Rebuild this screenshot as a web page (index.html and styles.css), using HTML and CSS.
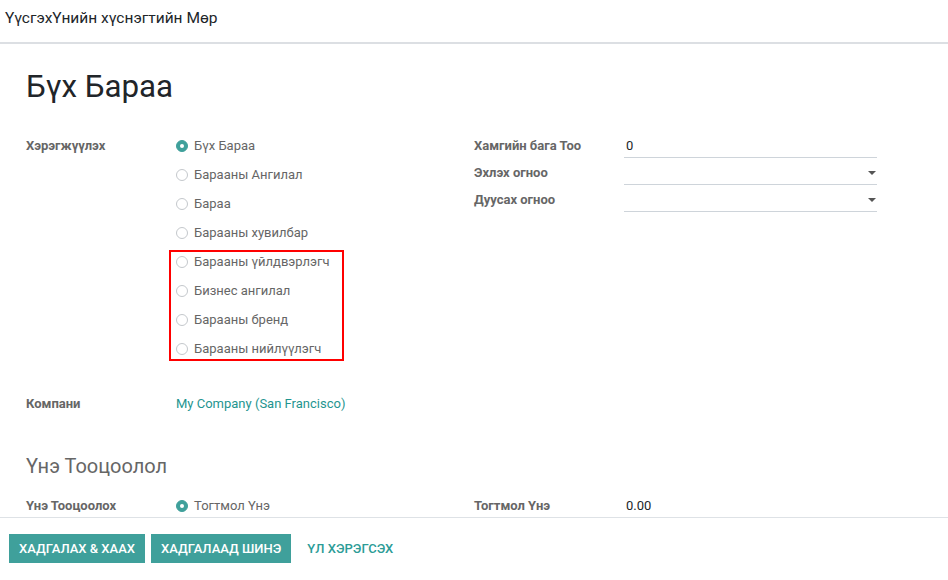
FILE: index.html
```html
<!DOCTYPE html>
<html lang="mn">
<head>
<meta charset="utf-8">
<title>ҮүсгэхҮнийн хүснэгтийн Мөр</title>
<link rel="stylesheet" href="styles.css">
</head>
<body>
<div class="dialog">
  <header class="dlg-header">ҮүсгэхҮнийн хүснэгтийн Мөр</header>
  <main class="dlg-body">
    <h1 class="title">Бүх Бараа</h1>
    <div class="group">
      <div class="col">
        <div class="row top">
          <div class="label">Хэрэгжүүлэх</div>
          <div class="radios">
            <div class="radio checked"><span class="dot"></span>Бүх Бараа</div>
            <div class="radio"><span class="dot"></span>Барааны Ангилал</div>
            <div class="radio"><span class="dot"></span>Бараа</div>
            <div class="radio"><span class="dot"></span>Барааны хувилбар</div>
            <div class="radio"><span class="dot"></span>Барааны үйлдвэрлэгч</div>
            <div class="radio"><span class="dot"></span>Бизнес ангилал</div>
            <div class="radio"><span class="dot"></span>Барааны бренд</div>
            <div class="radio"><span class="dot"></span>Барааны нийлүүлэгч</div>
            <div class="highlight"></div>
          </div>
        </div>
      </div>
      <div class="col">
        <div class="frow">
          <div class="label">Хамгийн бага Тоо</div>
          <div class="input">0</div>
        </div>
        <div class="frow">
          <div class="label">Эхлэх огноо</div>
          <div class="input select"><span class="caret"></span></div>
        </div>
        <div class="frow">
          <div class="label">Дуусах огноо</div>
          <div class="input select"><span class="caret"></span></div>
        </div>
      </div>
    </div>
    <div class="group company">
      <div class="col">
        <div class="row">
          <div class="label">Компани</div>
          <a class="link">My Company (San Francisco)</a>
        </div>
      </div>
    </div>
    <h2 class="section">Үнэ Тооцоолол</h2>
    <div class="group">
      <div class="col">
        <div class="row">
          <div class="label">Үнэ Тооцоолох</div>
          <div class="radio checked"><span class="dot"></span>Тогтмол Үнэ</div>
        </div>
      </div>
      <div class="col">
        <div class="frow">
          <div class="label">Тогтмол Үнэ</div>
          <div class="input">0.00</div>
        </div>
      </div>
    </div>
  </main>
  <footer class="dlg-footer">
    <button class="btn primary">ХАДГАЛАХ &amp; ХААХ</button>
    <button class="btn primary">ХАДГАЛААД ШИНЭ</button>
    <button class="btn plain">ҮЛ ХЭРЭГСЭХ</button>
  </footer>
</div>
</body>
</html>
```
FILE: styles.css
```css
* { box-sizing: border-box; }
html, body { margin: 0; padding: 0; background: #fff; }
body {
  font-family: Roboto, "Noto Sans", "Liberation Sans", sans-serif;
  font-size: 13px;
  color: #4c4c4c;
}
.dialog {
  width: 948px;
  height: 580px;
  display: flex;
  flex-direction: column;
  overflow: hidden;
}
.dlg-header {
  height: 44px;
  flex: none;
  padding: 8px 0 0 5px;
  font-size: 15.5px;
  line-height: 20px;
  color: #212529;
  border-bottom: 2px solid #dcdfe3;
}
.dlg-body {
  flex: 1;
  overflow: hidden;
  padding: 0 26px;
}
.title {
  margin: 23px 0 0;
  font-size: 31.3px;
  font-weight: 400;
  line-height: 40px;
  color: #212529;
}
.group {
  display: flex;
  margin-top: 24px;
}
.col { width: 448px; }
.row {
  display: flex;
  align-items: flex-start;
  min-height: 29px;
}
.label {
  width: 150px;
  flex: none;
  font-weight: 700;
  color: #666;
  line-height: 29px;
}
.frow .label {
  line-height: 25px;
  padding-top: 2px;
}
.radios {
  position: relative;
  display: flex;
  flex-direction: column;
}
.radio {
  display: flex;
  align-items: center;
  height: 29px;
  color: #666;
}
.dot {
  width: 12px;
  height: 12px;
  border-radius: 50%;
  border: 1px solid #c4c8cc;
  background: #fff;
  margin-right: 6px;
  flex: none;
  position: relative;
}
.radio.checked .dot {
  background: #3fa09b;
  border-color: #3fa09b;
}
.radio.checked .dot::after {
  content: "";
  position: absolute;
  left: 3px;
  top: 3px;
  width: 4px;
  height: 4px;
  border-radius: 50%;
  background: #fff;
}
.highlight {
  position: absolute;
  left: -7px;
  top: 119px;
  width: 175px;
  height: 111px;
  border: 2px solid #f00;
  pointer-events: none;
}
.frow {
  display: flex;
  height: 27px;
}
.input {
  width: 253px;
  height: 27px;
  border-bottom: 1px solid #ced4da;
  padding: 4px 2px 0;
  line-height: 21px;
  color: #212529;
  position: relative;
}
.caret {
  position: absolute;
  right: 1px;
  top: 13px;
  width: 0;
  height: 0;
  border-left: 4px solid transparent;
  border-right: 4px solid transparent;
  border-top: 4px solid #555;
}
.company { margin-top: 26px; }
.link {
  color: #1f9590;
  line-height: 29px;
  text-decoration: none;
}
.section {
  margin: 36px 0 0;
  font-size: 20px;
  font-weight: 400;
  line-height: 24px;
  color: #666;
}
.section + .group { margin-top: 13px; }
.dlg-footer {
  flex: none;
  height: 63px;
  border-top: 1px solid #dee2e6;
  display: flex;
  align-items: flex-start;
  padding: 16px 0 0 9px;
  gap: 6px;
}
.btn {
  font-family: Roboto, "Noto Sans", "Liberation Sans", sans-serif;
  font-size: 13px;
  font-weight: 500;
  height: 29px;
  padding: 0 10px;
  border: none;
  cursor: pointer;
}
.btn.primary {
  background: #3fa09b;
  color: #fff;
}
.btn.plain {
  background: transparent;
  color: #2c9c97;
}
```
